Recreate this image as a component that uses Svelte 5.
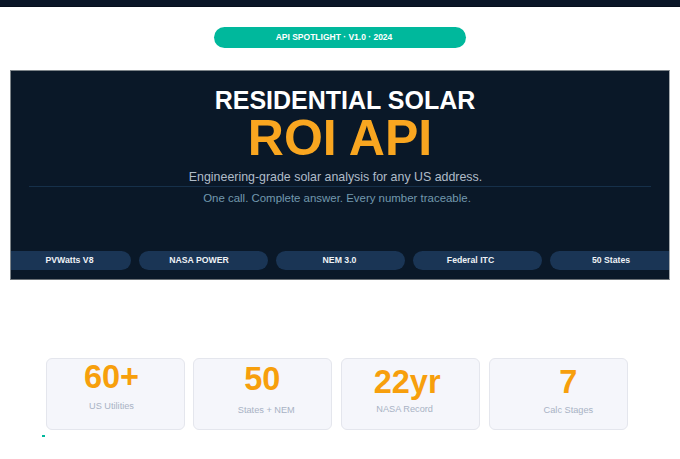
<script>
  // cls = how far the label sits off the chip's centre in the source
  const chips = [
    { name: "PVWatts V8", cls: "" },
    { name: "NASA POWER", cls: "left-s" },
    { name: "NEM 3.0", cls: "left-xs" },
    { name: "Federal ITC", cls: "left-l" },
    { name: "50 States", cls: "left-m" }
  ];
  // the numbers don't sit quite centred in the source, so each card has its own nudges
  const stats = [
    { value: "60+", label: "US Utilities", cls: "a" },
    { value: "50", label: "States + NEM", cls: "b" },
    { value: "22yr", label: "NASA Record", cls: "c" },
    { value: "7", label: "Calc Stages", cls: "d" }
  ];
</script>

<div class="page">
  <div class="topbar"></div>

  <div class="badge-row">
    <div class="badge">API SPOTLIGHT · V1.0 · 2024</div>
  </div>

  <section class="hero">
    <h1>RESIDENTIAL SOLAR</h1>
    <h2>ROI API</h2>
    <p class="sub">Engineering-grade solar analysis for any US address.</p>
    <div class="rule"></div>
    <p class="tag">One call. Complete answer. Every number traceable.</p>
    <div class="chips">
      {#each chips as chip}
        <div class="chip {chip.cls}">{chip.name}</div>
      {/each}
    </div>
  </section>

  <div class="stats">
    {#each stats as s}
      <div class="stat {s.cls}">
        <div class="value">{s.value}</div>
        <div class="label">{s.label}</div>
      </div>
    {/each}
  </div>

  <div class="dot"></div>
</div>

<style>
  :global(body) {
    margin: 0;
    background: #fff;
  }

  .page {
    width: 680px;
    height: 459px;
    overflow: hidden;
    font-family: "Liberation Sans", Arial, sans-serif;
  }

  .topbar {
    height: 6px;
    background: #0a1628;
    border-bottom: 1px solid #060e1c;
  }

  .badge-row {
    display: flex;
    justify-content: center;
    margin-top: 20px;
  }

  .badge {
    box-sizing: border-box;
    width: 252px;
    height: 21px;
    padding-right: 12px;
    line-height: 21px;
    border-radius: 11px;
    background: #00b89c;
    color: #fff;
    font-size: 8.5px;
    font-weight: bold;
    text-align: center;
  }

  .hero {
    box-sizing: border-box;
    width: 660px;
    height: 210px;
    margin: 22px 0 0 10px;
    border: 1px solid #7d8489;
    border-right-color: #a4a9ad;
    border-bottom-color: #6b7176;
    background: #0a1828;
    text-align: center;
    overflow: hidden;
  }

  h1 {
    margin: 16px 0 0;
    padding-left: 10px;
    font-size: 25px;
    line-height: 27px;
    font-weight: bold;
    color: #fff;
  }

  h2 {
    margin: 0;
    font-size: 50px;
    line-height: 48px;
    font-weight: bold;
    color: #f9a620;
  }

  .sub {
    margin: 7px 0 0;
    padding-right: 9px;
    font-size: 12.4px;
    line-height: 17px;
    color: #b0bcc8;
  }

  .rule {
    height: 1px;
    margin: 0 18px;
    background: #16304a;
  }

  .tag {
    margin: 3px 0 0;
    padding-right: 6px;
    font-size: 11.45px;
    line-height: 16px;
    color: #7299ae;
  }

  .chips {
    display: flex;
    justify-content: center;
    gap: 8px;
    margin-top: 45px;
  }

  .chip {
    box-sizing: border-box;
    flex: 0 0 129px;
    height: 19px;
    padding-left: 7px;
    line-height: 18px;
    border-radius: 10px;
    background: #1a3555;
    color: #eef2f6;
    font-size: 8.7px;
    font-weight: bold;
  }

  .chip.left-xs { padding: 0 1px 0 0; }
  .chip.left-s { padding: 0 8px 0 0; }
  .chip.left-m { padding: 0 6px 0 0; }
  .chip.left-l { padding: 0 13px 0 0; }

  .stats {
    display: flex;
    gap: 8.8px;
    margin: 78px 0 0 45.5px;
  }

  .stat {
    box-sizing: border-box;
    flex: 0 0 139px;
    height: 72px;
    border: 1.5px solid #e4e6ed;
    border-radius: 6px;
    background: #f5f6fb;
    text-align: center;
  }

  .value {
    font-size: 32.5px;
    line-height: 36px;
    font-weight: bold;
    color: #f79f0c;
  }

  .label {
    font-size: 9.2px;
    line-height: 12px;
    color: #a8b2c4;
  }

  .a .value { margin: 0 7px 0 0; }
  .a .label { margin: 5px 7px 0 0; }
  .b .value { margin: 2px 1px 0 0; }
  .b .label { margin: 7px 0 0 7px; }
  .c .value { margin: 5px 7px 0 0; }
  .c .label { margin: 3px 12px 0 0; }
  .d .value { margin: 5px 0 0 20px; }
  .d .label { margin: 4px 0 0 20px; }

  .dot {
    width: 3px;
    height: 2px;
    margin: 5px 0 0 42px;
    background: #00b89c;
  }
</style>
